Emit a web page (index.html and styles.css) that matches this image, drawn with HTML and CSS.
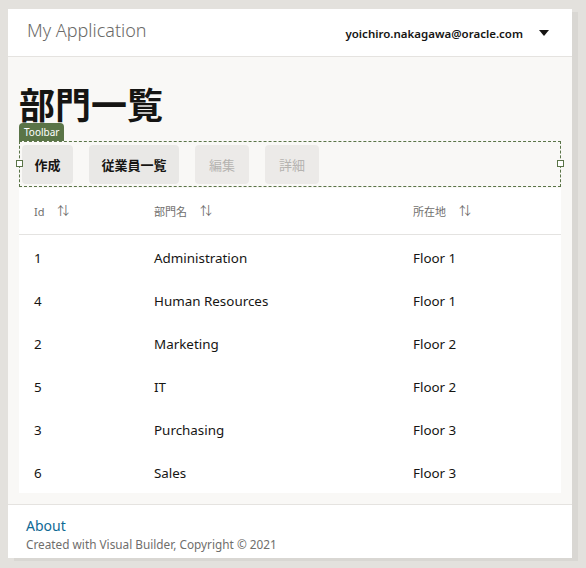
FILE: index.html
```html
<!DOCTYPE html>
<html lang="ja">
<head>
<meta charset="utf-8">
<title>部門一覧</title>
<link rel="stylesheet" href="styles.css">
</head>
<body>
<div class="app">
  <header class="topbar">
    <span class="app-name">My Application</span>
    <div class="user">
      <span class="email">yoichiro.nakagawa@oracle.com</span>
      <svg class="caret" width="10" height="6" viewBox="0 0 10 6"><path d="M0 0H10L5 6Z" fill="#161513"/></svg>
    </div>
  </header>
  <main class="content">
    <h1 class="title">部門一覧</h1>
    <div class="toolbar-wrap">
      <span class="tag">Toolbar</span>
      <div class="toolbar">
        <span class="handle handle-left"></span>
        <span class="handle handle-right"></span>
        <button class="btn">作成</button>
        <button class="btn">従業員一覧</button>
        <button class="btn disabled">編集</button>
        <button class="btn disabled">詳細</button>
      </div>
    </div>
    <div class="table">
      <div class="row head">
        <div class="c1">Id <span class="sort">⇅</span></div>
        <div class="c2">部門名 <span class="sort">⇅</span></div>
        <div class="c3">所在地 <span class="sort">⇅</span></div>
      </div>
      <div class="row"><div class="c1">1</div><div class="c2">Administration</div><div class="c3">Floor 1</div></div>
      <div class="row"><div class="c1">4</div><div class="c2">Human Resources</div><div class="c3">Floor 1</div></div>
      <div class="row"><div class="c1">2</div><div class="c2">Marketing</div><div class="c3">Floor 2</div></div>
      <div class="row"><div class="c1">5</div><div class="c2">IT</div><div class="c3">Floor 2</div></div>
      <div class="row"><div class="c1">3</div><div class="c2">Purchasing</div><div class="c3">Floor 3</div></div>
      <div class="row"><div class="c1">6</div><div class="c2">Sales</div><div class="c3">Floor 3</div></div>
    </div>
  </main>
  <footer class="footer">
    <a class="about" href="#">About</a>
    <div class="copy">Created with Visual Builder, Copyright © 2021</div>
  </footer>
</div>
</body>
</html>
```
FILE: styles.css
```css
* { box-sizing: border-box; }
html, body { margin: 0; padding: 0; }
body {
  background: #e3e1dd;
  font-family: "Noto Sans", "Noto Sans CJK JP", sans-serif;
  color: #161513;
  width: 586px;
  height: 568px;
  overflow: hidden;
}
.app {
  margin: 9px 0 0 8px;
  width: 564px;
  height: 549px;
  background: #fff;
  box-shadow: 6px 3px 0 #d9d7d3;
  display: flex;
  flex-direction: column;
}
.topbar {
  height: 48px;
  flex: none;
  border-bottom: 1px solid #e5e3e0;
  display: flex;
  align-items: center;
  justify-content: space-between;
  padding: 0 23px 0 19px;
}
.app-name {
  font-size: 18px;
  font-weight: 300;
  color: #6b6a68;
  margin-top: -6px;
}
.user {
  display: flex;
  align-items: center;
  gap: 16px;
  margin-top: 2px;
}
.email {
  font-size: 11.5px;
  font-weight: 600;
}
.caret { margin-top: -2px; }
.content {
  flex: 1;
  background: #f9f8f6;
  padding: 0 11px;
  border-bottom: 1px solid #e5e3e0;
}
.title {
  margin: 27px 0 0;
  font-size: 36px;
  line-height: 38px;
  font-weight: 700;
  font-family: "Noto Sans CJK JP", sans-serif;
}
.toolbar-wrap {
  display: flex;
  flex-direction: column;
  align-items: flex-start;
  margin-top: 1px;
}
.tag {
  display: block;
  background: #5a7447;
  color: #fff;
  font-size: 10px;
  line-height: 18px;
  height: 18px;
  padding: 0 5px;
  border-radius: 4px 4px 0 0;
}
.toolbar {
  position: relative;
  align-self: stretch;
  height: 46px;
  border: 1px dashed #5a7447;
  display: flex;
  align-items: center;
  gap: 15px;
  padding: 0 2px;
}
.handle {
  position: absolute;
  top: 18px;
  width: 7px;
  height: 7px;
  border: 1px solid #5a7447;
  background: #fff;
}
.handle-left { left: -4px; }
.handle-right { right: -4px; }
.btn {
  height: 39px;
  border: none;
  border-radius: 4px;
  background: #e9e8e6;
  font-family: "Noto Sans CJK JP", sans-serif;
  font-size: 13px;
  font-weight: 700;
  color: #161513;
  padding: 0 12.5px;
}
.btn + .btn { margin-left: 1px; }
.btn.disabled {
  background: #eceae8;
  color: #b5b3b0;
  font-weight: 400;
  padding: 0 14px;
}
.table {
  background: #fff;
  margin-top: 1px;
}
.row {
  display: grid;
  grid-template-columns: 120px 259px 1fr;
  height: 43px;
  align-items: center;
  font-size: 13.4px;
  padding-left: 15px;
  padding-top: 2px;
}
.head {
  height: 47px;
  padding-top: 0;
  border-bottom: 1px solid #e4e3e1;
  font-size: 11px;
  color: #6f6e6c;
}
.sort {
  margin-left: 10px;
  font-size: 12px;
  color: #6f6e6c;
}
.footer {
  padding: 10px 18px 0;
  flex: none;
  height: 53px;
}
.about {
  display: block;
  font-size: 14px;
  color: #0f6a95;
  text-decoration: none;
  line-height: 21px;
}
.copy {
  font-size: 11.8px;
  color: #6f6e6c;
  line-height: 17px;
}
```
